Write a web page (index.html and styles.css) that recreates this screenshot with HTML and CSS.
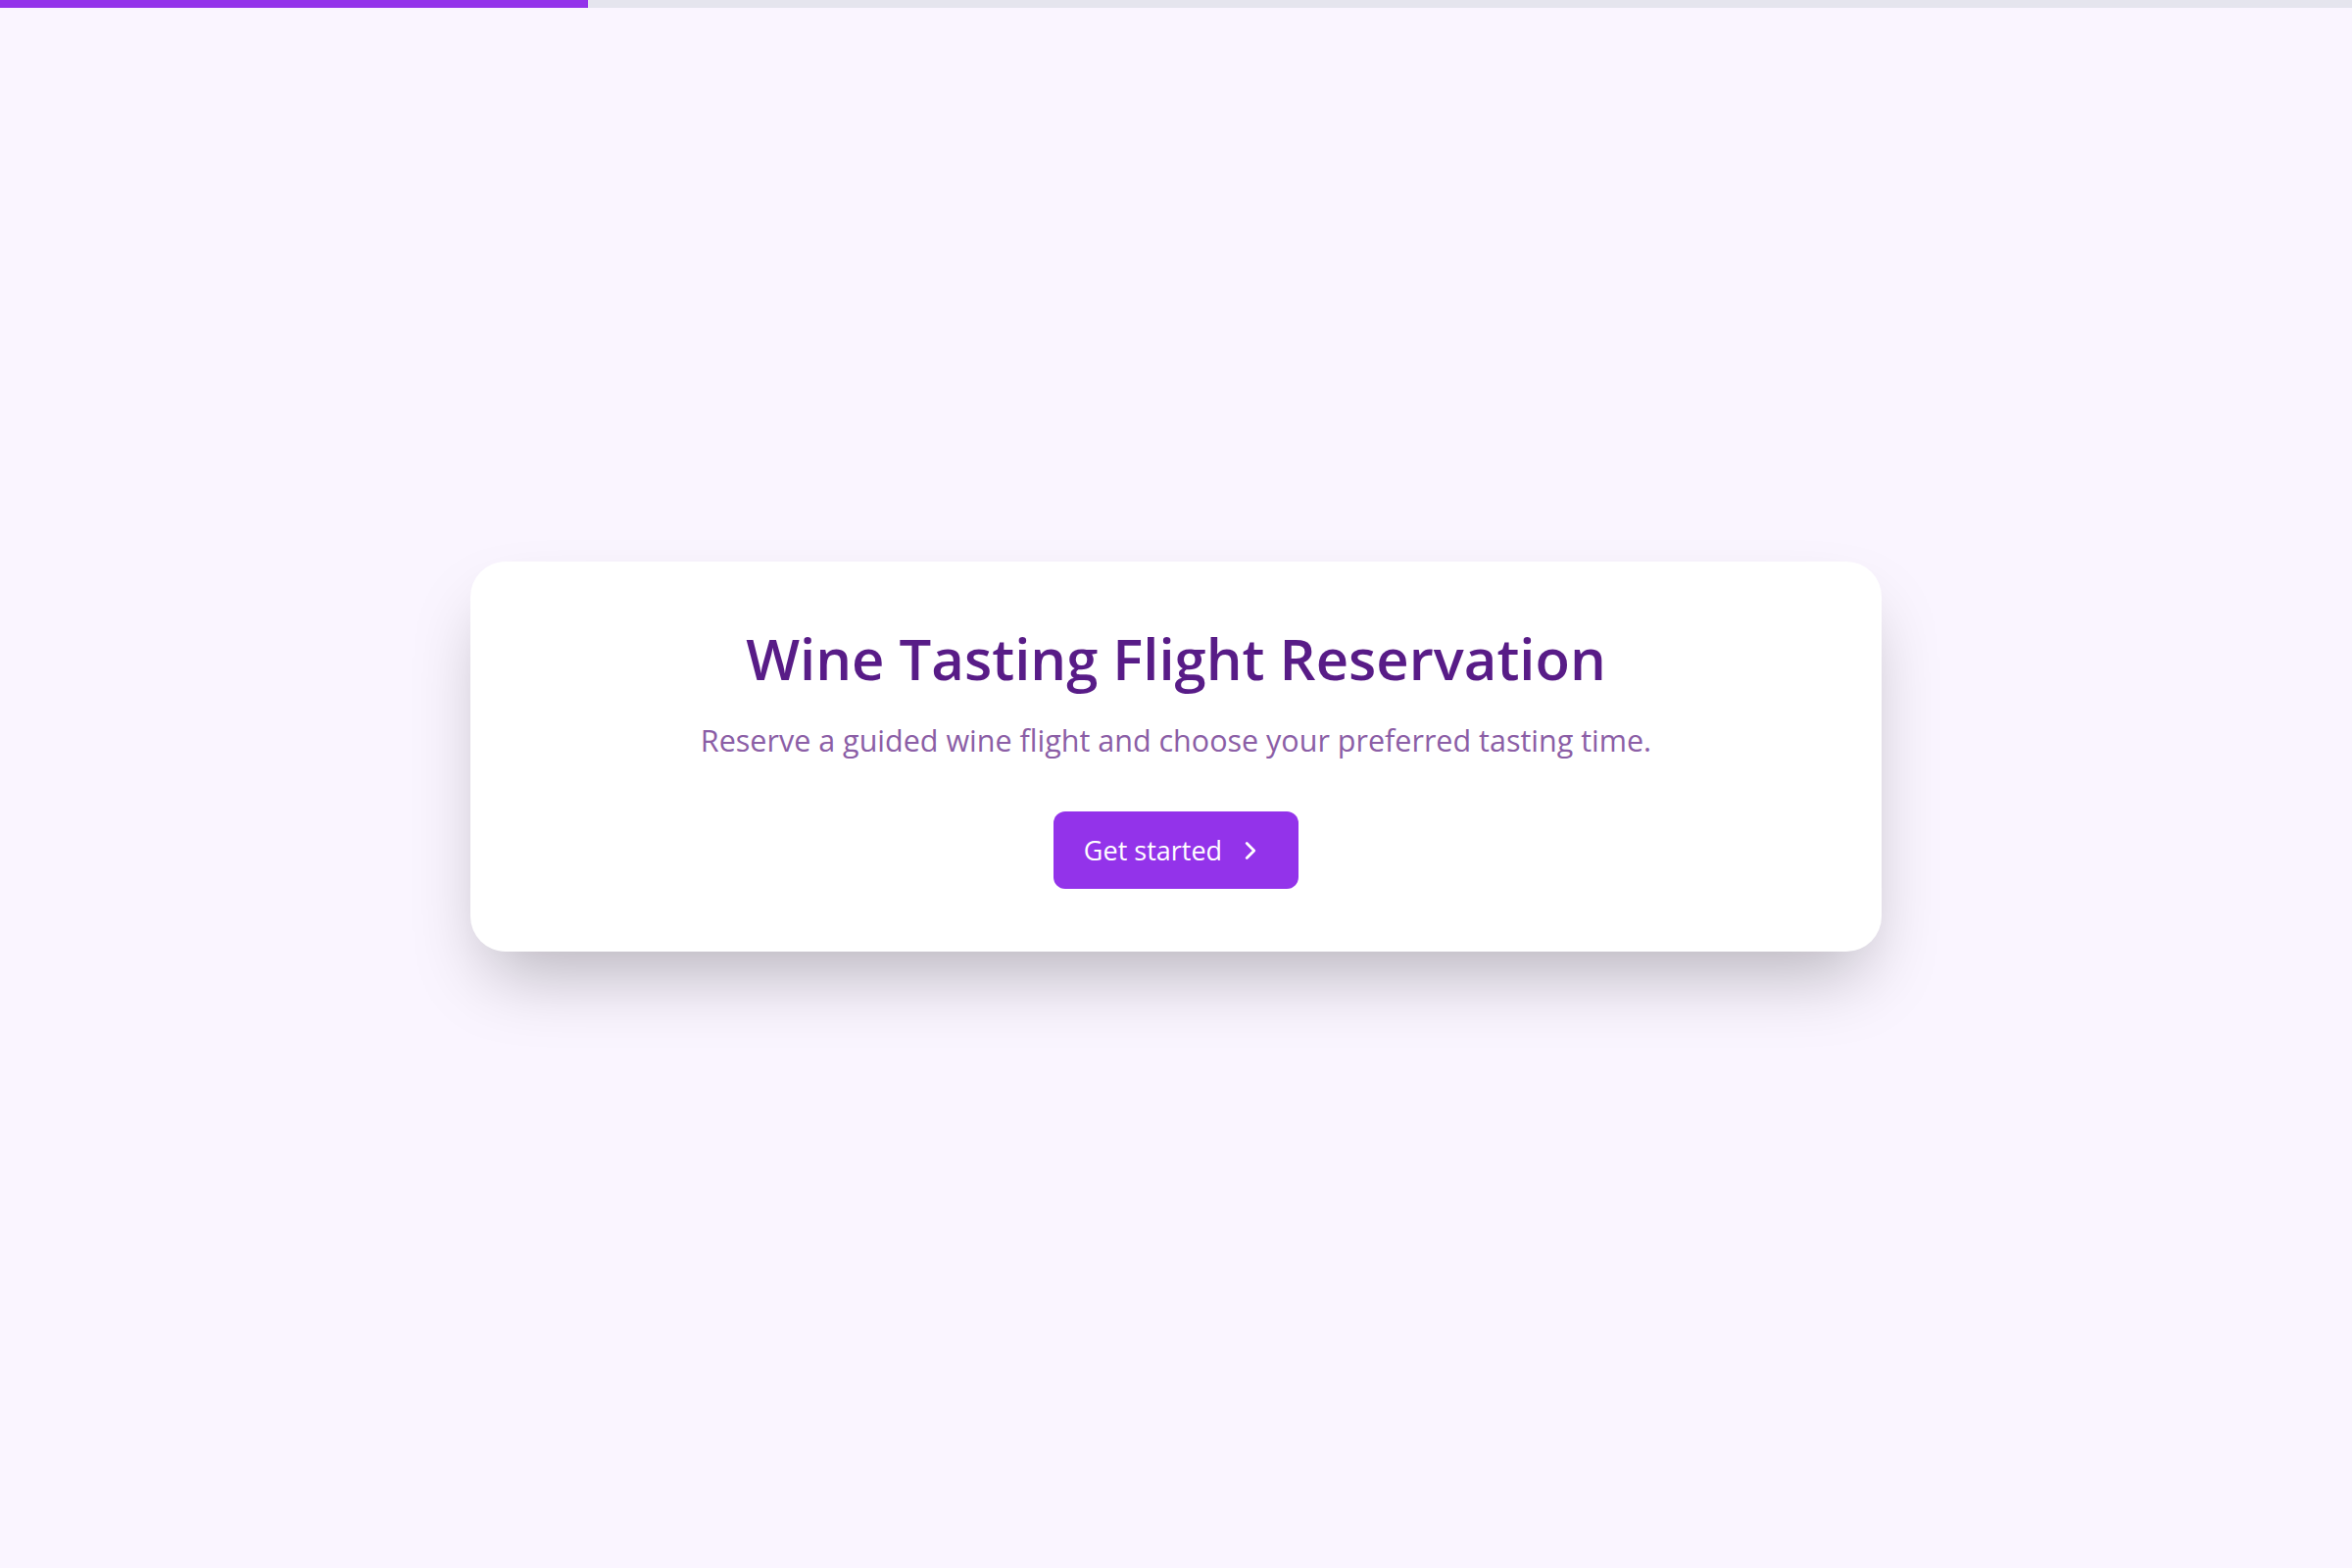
FILE: index.html
```html
<!DOCTYPE html>
<html lang="en">
<head>
    <meta charset="UTF-8">
    <meta name="viewport" content="width=device-width, initial-scale=1.0">
    <title>Wine Tasting Flight Reservation</title>
    <link rel="stylesheet" href="styles.css">
</head>
<body>
    <div class="progress">
        <div class="progress_fill" style="width: 25%"></div>
    </div>
    <main class="stage">
        <section class="card">
            <h1 class="title">Wine Tasting Flight Reservation</h1>
            <p class="subtitle">Reserve a guided wine flight and choose your preferred tasting time.</p>
            <button class="start_btn" type="button">
                <span>Get started</span>
                <svg class="chevron" viewBox="0 0 24 24" width="30" height="30" fill="none" stroke="currentColor" stroke-width="2.2" stroke-linecap="round" stroke-linejoin="round">
                    <path d="M9 6l6 6-6 6"/>
                </svg>
            </button>
        </section>
    </main>
</body>
</html>
```

FILE: styles.css
```css
* {margin: 0; padding: 0; box-sizing: border-box;}
body {
    background: #faf5ff;
    font-family: "Open Sans", "Noto Sans", sans-serif;
    min-height: 100vh;
}
.progress {
    height: 8px;
    background: #e5e5ee;
}
.progress_fill {
    height: 100%;
    background: #9333ea;
}
.stage {
    min-height: calc(100vh - 8px);
    padding-bottom: 64px;
    display: flex;
    align-items: center;
    justify-content: center;
}
.card {
    width: 1440px;
    background: #fff;
    border-radius: 36px;
    padding: 63px 48px 64px;
    box-shadow: 0 38px 75px -18px rgba(0, 0, 0, 0.28);
    display: flex;
    flex-direction: column;
    align-items: center;
    text-align: center;
}
.title {
    font-size: 58px;
    line-height: 72px;
    font-weight: 600;
    color: #581c87;
}
.subtitle {
    margin-top: 25px;
    font-size: 30.5px;
    line-height: 45px;
    color: #8b5ea6;
}
.start_btn {
    margin-top: 50px;
    height: 79px;
    padding: 0 34px 0 31px;
    border: none;
    border-radius: 12px;
    background: #9333ea;
    color: #fff;
    font-family: inherit;
    font-size: 27px;
    display: flex;
    align-items: center;
    gap: 14px;
}
.chevron {
    display: block;
}
```
